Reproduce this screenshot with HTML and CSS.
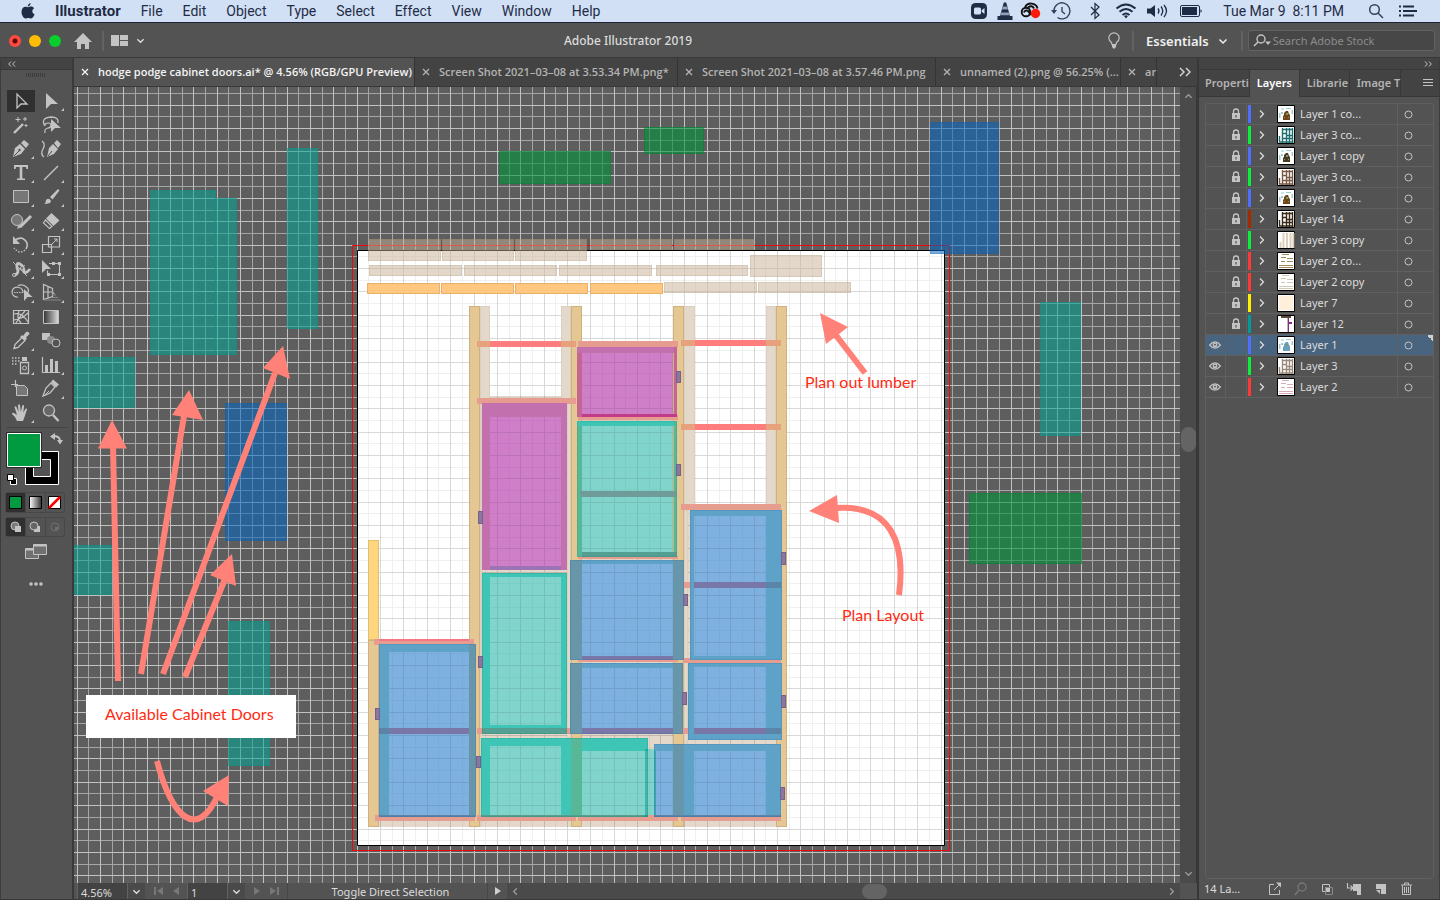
FILE: index.html
```html
<!DOCTYPE html>
<html lang="en">
<head>
<meta charset="utf-8">
<title>Adobe Illustrator 2019</title>
<link rel="stylesheet" href="styles.css">
</head>
<body>
<svg class="defs" aria-hidden="true">
  <symbol id="chev" viewBox="0 0 10 10"><path d="M1.500 3.500 5 7l3.500-3.500" fill="none" stroke="currentColor" stroke-width="1.500"/></symbol>
  <symbol id="x" viewBox="0 0 8 8"><path d="M1 1l6 6M7 1 1 7" stroke="currentColor" stroke-width="1.300"/></symbol>
  <symbol id="lock" viewBox="0 0 10 12"><path d="M2.500 6V3.500a2.500 2.500 0 0 1 5 0V6" fill="none" stroke="currentColor" stroke-width="1.300"/><path fill="currentColor" fill-rule="evenodd" d="M1 5h8v6H1zM4.400 7v2.500h1.200V7z"/></symbol>
  <symbol id="eye" viewBox="0 0 12 8"><path d="M.6 4Q6-2.400 11.400 4 6 10.400.6 4z" fill="none" stroke="currentColor" stroke-width="1.200"/><circle cx="6" cy="4" r="2.400" fill="currentColor"/><circle cx="6" cy="3.600" r=".9" fill="#4b4b4b"/></symbol>
</svg>

<header class="menubar">
  <nav class="menus">
    <button class="apple" aria-label="Apple menu"><svg width="14" height="16" viewBox="0 0 14 16"><path fill="#1f2c45" d="M9.600 0c.2 1.700-1.200 3.400-2.800 3.400C6.600 1.700 8.200.2 9.600 0zM7.100 4.300c.8 0 1.700-.7 3-.7 1.200 0 2.300.6 3 1.600-2.600 1.500-2.200 5 .5 6.100-.6 1.700-2 4.200-3.500 4.200-1 0-1.500-.6-2.800-.6s-1.900.6-2.800.6C2.500 15.500.5 12 .5 8.800c0-3.300 2-5.100 4-5.100 1.100 0 2 .6 2.600.6z"/></svg></button>
    <button class="strong">Illustrator</button><button>File</button><button>Edit</button><button>Object</button><button>Type</button><button>Select</button><button>Effect</button><button>View</button><button>Window</button><button>Help</button>
  </nav>
  <div class="status-icons">
    <svg width="26" height="20" viewBox="-13 -10 26 20"><rect x="-8" y="-8" width="16" height="16" rx="4.500" fill="#1f2c45"/><rect x="-5" y="-3.500" width="7" height="7" rx="1.500" fill="#d2e0f5"/><path fill="#d2e0f5" d="M2.700-.8 5.500-3v6L2.700.8z"/></svg>
    <svg width="26" height="20" viewBox="-13 -10 26 20"><path fill="#1f2c45" d="M-1.200-8.500h2.400L5 5h2.500v4h-15V5H-5z"/><path fill="#8fa0bb" d="M-2.200-4.500h4.400l.8 3h-6zM-4 1.500h8l.8 2.800h-9.600z"/></svg>
    <svg width="26" height="20" viewBox="-13 -10 26 20"><g fill="none" stroke="#111" stroke-width="1.900"><path d="M-6-3.500A6.500 6 0 0 1 6.500-2.500"/><circle cx="-5" cy="1" r="4.300"/><path d="M-7 1.500a2.500 2.500 0 0 1 4-1.500L0 4M-3-3.500q4-3 6 1"/></g><circle cx="4.500" cy="2.500" r="4.700" fill="#ff1a0a"/></svg>
    <svg width="34" height="20" viewBox="-17 -10 34 20"><g fill="none" stroke="#33415c" stroke-width="1.400"><path d="M-7-1A8 8 0 1 1-3.500 6.500"/><path d="M1-4v4.500l3 2.500"/></g><path d="M-10-1h6l-3 4z" fill="#33415c"/></svg>
    <svg width="34" height="20" viewBox="-17 -10 34 20"><path d="M-4-4 4 4 0 7.500v-15L4-4-4 4" fill="none" stroke="#1f2c45" stroke-width="1.200"/></svg>
    <svg width="28" height="20" viewBox="-14 -10 28 20"><g fill="none" stroke="#1f2c45" stroke-width="2"><path d="M-9.500-2.500q9.500-8 19 0M-6.500.8q6.500-5.600 13 0M-3.500 4q3.500-3 7 0"/></g><path d="M-2 5q2-1.600 4 0L0 7.500z" fill="#1f2c45"/></svg>
    <svg width="34" height="20" viewBox="-17 -10 34 20"><path d="M-10-2.500h3.500L-2-6V6l-4.500-3.500H-10z" fill="#1f2c45"/><path d="M1-2.500q2 2.500 0 5M4-4.500q3.500 4.500 0 9M7-6q5 6 0 12" fill="none" stroke="#1f2c45" stroke-width="1.300"/></svg>
    <svg width="34" height="20" viewBox="-17 -10 34 20"><rect x="-10.500" y="-5.500" width="19" height="11" rx="1.500" fill="none" stroke="#1f2c45"/><path d="M-9-4H6v8H-9z" fill="#1f2c45"/><path d="M9.500-2q2.500 2 0 4z" fill="#1f2c45"/></svg>
    <span class="clock">Tue Mar 9&nbsp; 8:11 PM</span>
    <svg class="spot" width="16" height="16" viewBox="0 0 16 16"><g fill="none" stroke="#33415c" stroke-width="1.500"><circle cx="6.500" cy="6.500" r="4.800"/><path d="m10 10 5 5"/></g></svg>
    <svg class="list" width="20" height="14" viewBox="0 0 20 14"><path d="M1 2.500h2m2 0h11M1 7h2m2 0h14M1 11.500h2m2 0h11" stroke="#1f2c45" stroke-width="1.800"/></svg>
  </div>
</header>

<div class="appbar">
  <div class="app-left">
    <div class="lights"><button class="light red" aria-label="Close"></button><button class="light yellow" aria-label="Minimize"></button><button class="light green" aria-label="Zoom"></button></div>
    <button class="home" aria-label="Home"><svg width="18" height="16" viewBox="0 0 18 16"><path fill="#c3c3c3" d="M9 0l9 9h-3v7h-4v-5H7v5H3V9H0z"/></svg></button>
    <span class="vline"></span>
    <button class="arrange" aria-label="Arrange documents"><svg width="17" height="12" viewBox="0 0 17 12"><path fill="#c3c3c3" d="M0 0h8v11H0zM9 0h8v5H9zM9 6h8v5H9z"/></svg><svg width="9" height="9"><use href="#chev"/></svg></button>
  </div>
  <h1>Adobe Illustrator 2019</h1>
  <div class="app-right">
    <svg width="14" height="18" viewBox="0 0 14 18"><path d="M5 12.500 4.500 10.500Q1.800 8.500 1.800 6a5.200 5.200 0 0 1 10.400 0q0 2.500-2.700 4.500L9 12.500z" fill="none" stroke="#c3c3c3" stroke-width="1.200"/><path d="M5 13h4v2L7 17l-2-2z" fill="#c3c3c3"/></svg>
    <span class="vline"></span>
    <button class="workspace">Essentials <svg width="10" height="10"><use href="#chev"/></svg></button>
    <span class="vline"></span>
    <label class="search"><svg width="18" height="13" viewBox="0 0 18 13"><circle cx="8" cy="5" r="4" fill="none" stroke="#c3c3c3" stroke-width="1.400"/><path d="m5 8-4 4" stroke="#c3c3c3" stroke-width="1.600"/><path d="M12 7.500h6L15 11z" fill="#c3c3c3"/></svg><input type="text" placeholder="Search Adobe Stock" aria-label="Search Adobe Stock"></label>
  </div>
</div>

<main class="workspace-row">
  <aside class="toolbar">
    <div class="collapse left"><svg width="8" height="6" viewBox="0 0 8 6"><path d="M3 .5.700 3 3 5.500M7 .5 4.700 3 7 5.500" fill="none" stroke="#c3c3c3"/></svg></div>
    <div class="grip"></div>
    <div class="tools" id="tools"></div>
    <div class="swatches">
      <svg width="60" height="56" viewBox="0 0 60 56">
        <path fill-rule="evenodd" fill="#000" stroke="#fff" d="M19.500 19.500h33v33h-33zM27.500 27.500h17v17h-17z"/>
        <path fill="#009a40" stroke="#2b2b2b" d="M.5.500h35v35H.5z"/><path fill="#009a40" stroke="#fff" d="M1.500 1.500h33v33h-33z"/>
        <path d="M47 4q7 0 7 5" fill="none" stroke="#c3c3c3" stroke-width="1.800"/><path d="M49 1v7l-5-3.500zM51 8h6l-3 4.500z" fill="#c3c3c3"/>
        <path d="M4.500 46.500h6v6h-6z" fill="#000" stroke="#fff"/><path d="M1.500 42.500h6v6h-6z" fill="#fff" stroke="#000"/>
      </svg>
    </div>
    <div class="trio">
      <button class="on" aria-label="Color"><svg width="13" height="13"><path fill="#009a40" stroke="#000" d="M.5.500h12v12H.5z"/></svg></button>
      <button aria-label="Gradient"><svg width="13" height="13"><defs><linearGradient id="gr"><stop offset="0" stop-color="#fff"/><stop offset="1" stop-color="#333"/></linearGradient></defs><path fill="url(#gr)" stroke="#000" d="M.5.500h12v12H.5z"/></svg></button>
      <button aria-label="None"><svg width="13" height="13"><path fill="#fff" stroke="#000" d="M.5.500h12v12H.5z"/><path d="M1 12 12 1" stroke="#f00" stroke-width="2.500"/></svg></button>
    </div>
    <div class="trio short">
      <button class="on" aria-label="Draw normal"><svg width="12" height="12"><circle cx="5" cy="5" r="4" fill="#7a7a7a" stroke="#c3c3c3"/><path d="M5 5h6v6H5z" fill="#c3c3c3"/></svg></button>
      <button aria-label="Draw behind"><svg width="12" height="12"><path d="M5 5h6v6H5z" fill="#c3c3c3"/><circle cx="5" cy="5" r="4" fill="#666" stroke="#c3c3c3"/></svg></button>
      <button aria-label="Draw inside"><svg width="12" height="12"><circle cx="6" cy="6" r="4" fill="none" stroke="#707070"/><path d="M6 6h3v2L7 9H6z" fill="#707070"/></svg></button>
    </div>
    <button class="screenmode" aria-label="Change screen mode"><svg width="22" height="16"><path d="M.5 4.500h13v10H.5z" fill="#707070" stroke="#c3c3c3"/><path d="M8.500.5h13v10h-13z" fill="#707070" stroke="#c3c3c3"/><path d="M0 5h8v1.500H0zM8 1h14v1.500H8z" fill="#c3c3c3"/></svg></button>
    <button class="more" aria-label="Edit toolbar"><svg width="14" height="4"><circle cx="2" cy="2" r="1.800" fill="#c3c3c3"/><circle cx="7" cy="2" r="1.800" fill="#c3c3c3"/><circle cx="12" cy="2" r="1.800" fill="#c3c3c3"/></svg></button>
  </aside>

  <section class="document">
    <div class="tabs">
      <button class="tab t1 active"><svg width="8" height="8"><use href="#x"/></svg><span>hodge podge cabinet doors.ai* @ 4.56% (RGB/GPU Preview)</span></button>
      <button class="tab t2"><svg width="8" height="8"><use href="#x"/></svg><span>Screen Shot 2021–03–08 at 3.53.34 PM.png*</span></button>
      <button class="tab t3"><svg width="8" height="8"><use href="#x"/></svg><span>Screen Shot 2021–03–08 at 3.57.46 PM.png</span></button>
      <button class="tab t4"><svg width="8" height="8"><use href="#x"/></svg><span>unnamed (2).png @ 56.25% (...</span></button>
      <button class="tab t5"><svg width="8" height="8"><use href="#x"/></svg><span>ar</span></button>
      <button class="overflow" aria-label="More documents"><svg width="12" height="10" viewBox="0 0 12 10"><path d="m1 1 4 4-4 4M7 1l4 4-4 4" fill="none" stroke="#dadada" stroke-width="1.400"/></svg></button>
    </div>
    <div class="view">
      <svg class="canvas" role="img" aria-label="Cabinet door layout">
        <g transform="translate(-74 -87)">
          <g id="deskGrid" shape-rendering="crispEdges"></g>
          <path fill="#fff" d="M358 251h586v594H358z"/>
          <g id="cases"></g>
          <g id="doors"></g>
          <g id="boardGrid" shape-rendering="crispEdges"></g>
          <g id="doorTint" opacity=".4"></g>
          <g id="parts"></g>
          <path fill="none" stroke="#000" d="M357.500 250.500h587v595h-587z"/>
          <path fill="none" stroke="#f00808" d="M352.500 245.500h597v605h-597z"/>
          <g id="loose"></g>
          <g fill="none" stroke="#ff8177" stroke-width="6">
            <path d="M118 681 113 445M141 674l43-258M163 674l112-301M185 677l40-98M157 761c15 57 40 80 61 34M865 373l-30-39M899 595c7-54-9-91-64-87"/>
          </g>
          <path fill="#ff8177" d="M112 420 98 448.500h29zM189 390l-17 25 31 5zM283 346l-20 22 27 11zM232 554l-22 21 26 11zM229 775l-26 16 25 15zM820 313l28 14-22 17zM809 511l28-16 2 28z"/>
          <path fill="#fff" d="M86 695h210v43H86z"/>
          <g class="notes"><text x="105" y="720">Available Cabinet Doors</text><text x="805" y="388">Plan out lumber</text><text x="842" y="621">Plan Layout</text></g>
        </g>
      </svg>
      <div class="vscroll"><svg width="9" height="9" class="up"><use href="#chev"/></svg><span class="thumb"></span><svg width="9" height="9"><use href="#chev"/></svg></div>
    </div>
    <div class="statusbar">
      <input class="zoom" value="4.56%" aria-label="Zoom level"><button class="drop" aria-label="Zoom presets"><svg width="9" height="9"><use href="#chev"/></svg></button>
      <div class="nav"><svg width="9" height="8"><path d="M0 0h2v8H0zM9 0v8L3 4z" fill="#777"/></svg><svg width="6" height="8"><path d="M6 0v8L0 4z" fill="#777"/></svg></div>
      <input class="page" value="1" aria-label="Artboard number"><button class="drop" aria-label="Artboards"><svg width="9" height="9"><use href="#chev"/></svg></button>
      <div class="nav"><svg width="6" height="8"><path d="M0 0v8l6-4z" fill="#777"/></svg><svg width="9" height="8"><path d="M7 0h2v8H7zM0 0v8l6-4z" fill="#777"/></svg></div>
      <span class="hint">Toggle Direct Selection</span>
      <button class="play" aria-label="Status options"><svg width="6" height="8"><path d="M0 0v8l6-4z" fill="#d0d0d0"/></svg></button>
      <div class="hscroll"><svg width="9" height="9" class="lft"><use href="#chev"/></svg><span class="thumb"></span><svg width="9" height="9" class="rgt"><use href="#chev"/></svg></div>
      <span class="corner"></span>
    </div>
  </section>

  <aside class="panel">
    <div class="collapse right"><svg width="8" height="6" viewBox="0 0 8 6"><path d="M1 .5 3.300 3 1 5.500M5 .5 7.300 3 5 5.500" fill="none" stroke="#c3c3c3"/></svg></div>
    <div class="ptabs"><button>Properti</button><button class="active">Layers</button><button>Librarie</button><button>Image T</button><svg width="10" height="8"><path d="M0 .5h10M0 3.500h10M0 6.500h10" stroke="#c3c3c3"/></svg></div>
    <ul class="layers" id="layers"></ul>
    <footer class="pfoot">
      <span>14 La...</span>
      <svg width="14" height="14"><path d="M6 2.500H1.500v10h10V8" fill="none" stroke="#c3c3c3"/><path d="M6 8l5-5" stroke="#c3c3c3"/><path d="M8 .5h5v5z" fill="#c3c3c3"/></svg>
      <svg width="14" height="14"><circle cx="8" cy="5" r="4" fill="none" stroke="#777" stroke-width="1.300"/><path d="m5 8-4 5" stroke="#777" stroke-width="1.500"/></svg>
      <svg width="14" height="14"><path d="M2.500 2.500h7v7h-7z" fill="none" stroke="#c3c3c3"/><path d="M5 5h5v5H5z" fill="#c3c3c3"/><path d="M5.500 5.500h7v7h-7z" fill="none" stroke="#888"/></svg>
      <svg width="16" height="14"><path d="M1.500 1v5h5M4.500 3.500 7 6 4.500 8.500" fill="none" stroke="#c3c3c3" stroke-width="1.200"/><path d="M7 2h8v11h-4V9H7z" fill="#c3c3c3"/></svg>
      <svg width="14" height="14"><path d="M2 2h10v10H7V7H2z" fill="#c3c3c3"/><path d="M2 8h4v4z" fill="#c3c3c3"/></svg>
      <svg width="14" height="14"><path d="M1 3h11M4.500 3V1h4v2M2.500 3.500v9h8v-9M4.500 5v6M6.500 5v6M8.500 5v6" fill="none" stroke="#c3c3c3"/></svg>
    </footer>
  </aside>
</main>
<script src="app.js"></script>
</body>
</html>
```
FILE: styles.css
```css
* { box-sizing: border-box; }
body { margin: 0; height: 100vh; display: flex; flex-direction: column; overflow: hidden; background: #535353; color: #dcdcdc; font: 11px/14px "Noto Sans", "Open Sans", sans-serif; }
button, input { font: inherit; color: inherit; background: none; border: 0; padding: 0; margin: 0; outline: 0; }
svg { display: block; flex: none; }
.defs { position: absolute; width: 0; height: 0; }

.menubar { height: 23px; flex: none; display: flex; justify-content: space-between; align-items: center; background: #d2e0f5; border-bottom: 1px solid #1b2233; color: #1f2c45; font: 14px/22px Roboto, Inter, sans-serif; white-space: nowrap; }
.menus { display: flex; gap: 20px; padding-left: 21px; align-items: center; }
.menus .strong { font-weight: 700; font-size: 15px; }
.status-icons { display: flex; align-items: center; padding-right: 22px; }
.clock { margin: 0 24px 0 15px; }
.spot { margin-right: 14px; }

.appbar { height: 34px; flex: none; display: flex; align-items: center; padding-top: 1px; }
.app-left { width: 160px; display: flex; align-items: center; padding-left: 9px; }
.lights { display: flex; gap: 8px; margin-right: 13px; }
.light { width: 12px; height: 12px; border-radius: 50%; }
.light.red { background: radial-gradient(circle, #5a0804 2px, #ff4a42 3px); }
.light.yellow { background: #ffbd05; }
.light.green { background: #08cf2c; }
.vline { width: 2px; height: 20px; background: #626262; }
.home { margin-right: 10px; }
.arrange { display: flex; gap: 8px; align-items: center; margin-left: 7px; }
h1 { flex: 1; margin: 0; text-align: center; font-size: 12px; font-weight: 500; }
.app-right { width: 344px; display: flex; align-items: center; padding: 0 5px 0 11px; }
.app-right .vline { margin: 0 12px 0 11px; }
.workspace { display: flex; gap: 9px; align-items: center; font-size: 13px; font-weight: 600; color: #f0f0f0; }
.app-right .workspace + .vline { margin: 0 5px 0 13px; }
.search { flex: 1; min-width: 0; height: 21px; display: flex; align-items: center; gap: 2px; padding-left: 4px; border: 1px solid #636363; border-radius: 3px; background: #474747; }
.search input { min-width: 0; flex: 1; font-size: 11px; }
.search input::placeholder { color: #8c8c8c; opacity: 1; }

.workspace-row { flex: 1; min-height: 0; display: flex; border-bottom: 1px solid #383838; }
.collapse { height: 13px; flex: none; display: flex; align-items: center; padding: 0 7px; background: #434343; border-top: 1px solid #383838; border-bottom: 1px solid #383838; }
.collapse.right { justify-content: flex-end; }

.toolbar { width: 74px; flex: none; display: flex; flex-direction: column; border-left: 1px solid #3c3c3c; border-right: 2px solid #3a3a3a; }
.grip { width: 20px; height: 4px; margin: 3px 0 12px 25px; background: repeating-linear-gradient(90deg, #3c3c3c 0 1px, #535353 1px 2px); }
.tools { display: grid; grid-template-columns: 30px 30px; grid-auto-rows: 24px; margin-left: 5px; }
.tools button.on { background: linear-gradient(#303030, #303030) 1px 1px / 28px 22px no-repeat; }
.swatches { margin: 2px 5px 0; padding-top: 4px; border-top: 1px solid #454545; }
.trio { display: grid; grid-template-columns: repeat(3, 1fr); width: 60px; height: 21px; margin: 4px 0 0 4px; border: 1px solid #474747; border-radius: 3px; }
.trio.short { height: 20px; margin-top: 4px; }
.trio button { display: grid; place-items: center; border-left: 1px solid #474747; }
.trio .on { background: #303030; border-left: 0; }
.screenmode { align-self: flex-start; margin: 7px 0 0 24px; }
.more { align-self: flex-start; margin: 22px 0 0 28px; }

.document { flex: 1; min-width: 0; display: flex; flex-direction: column; }
.tabs { height: 30px; flex: none; display: flex; background: #434343; border-top: 1px solid #383838; border-bottom: 1px solid #383838; font: 700 11px/14px "Open Sans", "Noto Sans", sans-serif; font-weight: 600; color: #b4b4b4; }
.tab { display: flex; align-items: center; gap: 9px; padding-left: 7px; border-right: 1px solid #333; white-space: nowrap; text-align: left; flex: none; }
.tab.active { background: #535353; color: #f4f4f4; }
.t1 { width: 341px; } .t2 { width: 263px; } .t3 { width: 258px; } .t4 { width: 185px; } .t5 { width: 36px; }
.overflow { margin: 0 6px 0 auto; }
.view { flex: 1; min-height: 0; display: flex; }
.canvas { flex: 1; min-width: 0; height: 100%; background: #5e5e5e; }
.notes { font: 16px Lato, sans-serif; fill: #ff2b12; }
.vscroll { width: 17px; display: flex; flex-direction: column; justify-content: space-between; align-items: center; padding: 5px 0; background: #4a4a4a; color: #999; border-right: 1px solid #383838; }
.vscroll .thumb { width: 15px; height: 25px; border-radius: 8px; background: #646464; margin-bottom: 92px; }
.up { transform: rotate(180deg); }
.lft { transform: rotate(90deg); }
.rgt { transform: rotate(-90deg); }
.statusbar { height: 16px; flex: none; display: flex; align-items: center; padding-left: 3px; background: #535353; }
.statusbar input { height: 16px; background: #434343; padding: 2px 0 0 3px; border-left: 1px solid #626262; }
.zoom { width: 50px; }
.page { width: 40px; }
.drop { width: 18px; height: 16px; display: grid; place-items: center; background: #4a4a4a; border-left: 1px solid #626262; }
.nav { width: 42px; display: flex; justify-content: center; gap: 10px; }
.hint { width: 200px; padding: 2px 0 0 6px; text-align: center; border-left: 1px solid #474747; }
.play { width: 20px; height: 16px; display: grid; place-items: center; border-left: 1px solid #474747; }
.hscroll { flex: 1; height: 16px; display: flex; justify-content: space-between; align-items: center; padding: 0 4px; background: #4a4a4a; color: #999; }
.hscroll .thumb { width: 25px; height: 15px; border-radius: 8px; background: #646464; margin-left: 61px; }
.corner { width: 17px; }

.panel { width: 243px; flex: none; display: flex; flex-direction: column; border-left: 2px solid #383838; border-right: 1px solid #3c3c3c; }
.ptabs { display: flex; height: 27px; flex: none; align-items: center; background: #434343; font-weight: 600; color: #b4b4b4; border-bottom: 1px solid #383838; }
.ptabs button { min-width: 50px; height: 26px; padding-left: 7px; white-space: nowrap; text-align: left; border-right: 1px solid #383838; }
.ptabs button:first-child { padding-left: 6px; }
.ptabs .active { background: #535353; color: #fff; height: 27px; }
.ptabs svg { margin-left: auto; margin-right: 6px; }
.layers { flex: 1; min-height: 0; margin: 6px 5px 0 6px; padding: 0; list-style: none; border: 1px solid #606060; border-radius: 3px; }
.layer { height: 21px; display: grid; grid-template-columns: 20px 21px 5px 23px 22px 1fr 35px; align-items: center; border-bottom: 1px solid #606060; }
.layer.selected { background: linear-gradient(45deg, transparent 50%, #d0d0d0 50%) right top / 6px 6px no-repeat #49647e; }
.layer > * { height: 20px; display: flex; align-items: center; justify-content: center; }
.layer .cell { border-right: 1px solid #606060; color: #c3c3c3; }
.layer .cell:first-child { padding-right: 2px; }
.layer .bar { width: 3px; height: 18px; margin-left: 1px; }
.layer .twist { padding-right: 4px; }
.layer .name { justify-content: flex-start; padding-left: 3px; border-right: 1px solid #606060; white-space: nowrap; }
.layer .target { justify-content: flex-start; padding-left: 6px; }
.pfoot { height: 20px; flex: none; display: flex; align-items: center; gap: 12px; padding-left: 5px; }
.pfoot span { width: 52px; }
```
FILE: app.js
```javascript
const C = '#c3c3c3';
const line = (d, w = 1.2) => `<path d="${d}" fill="none" stroke="${C}" stroke-width="${w}"/>`;
const solid = d => `<path d="${d}" fill="${C}"/>`;

/* Tool glyphs, drawn in a 30 x 24 cell: [label, markup, has flyout] */
const tools = [
  ['Selection', line('M11 5v14l4-4h6z', 1.3), 0],
  ['Direct selection', solid('M10 4v16l5-5h7z'), 1],
  ['Magic wand', line('M8 20 17 11', 2.4) + line('M12 4v5M9.500 6.500h5M19 4v4M17 6h4M20 11v3M18.500 12.500h3', 1), 0],
  ['Lasso', line('M9 13q-5-8 6-9 8 0 7 6', 1.3) + line('M9 12a3 2.500 0 1 1 3 3q-4 1-3 5', 1.2) + solid('M15 6v13l4-4h6z'), 0],
  ['Pen', solid('M7 20l2-9 5-4 5 5-4 5zM15 6l3-3 5 4-3 4z') + '<path d="m8 19 5-5" stroke="#535353"/><circle cx="13.500" cy="13" r="1.200" fill="#535353"/>', 1],
  ['Curvature', solid('M11 20l2-9 4-4 5 5-4 5zM18 6l3-3 4 4-3 4z') + line('M6 4q4 3 1 8t1 8', 1.3) + '<path d="m12 19 4-5" stroke="#535353"/>', 0],
  ['Type', solid('M8 4h14v4h-1.500l-.5-2h-3.700v11.500H19V19h-8v-1.500h2.700V6H10l-.5 2H8z'), 1],
  ['Line', line('M8 19 22 5', 1.4), 1],
  ['Rectangle', '<path d="M7.500 5.500h15v12h-15z" fill="#777" stroke="#c3c3c3"/>', 1],
  ['Paintbrush', solid('M14 12 22 4l1.500 1.500-7 9zM8 19q2-1 2-4 3-3 5 1 0 3-7 3z'), 1],
  ['Shaper', '<circle cx="11" cy="11" r="5.500" fill="#777" stroke="#c3c3c3"/>' + line('M14 18 25 7', 3) + solid('M11 20l1.500-4 3 2z'), 1],
  ['Eraser', solid('M15.500 4 23.500 11.500 17.500 17 10 9.500z') + line('M9.500 11 16 17.500 13.500 19.500 7.500 14z', 1.2), 1],
  ['Rotate', line('M9 7q8-5 12 3 1 3-1 6', 1.600) + solid('M7 3v8h7z') + '<path d="M19 17q-5 5-11-2" fill="none" stroke="#c3c3c3" stroke-width="1.400" stroke-dasharray="1.500 1.500"/>', 1],
  ['Scale', line('M13 3.500h10.500v10.500H12.500V3.500zM6.500 11.500h9v8h-9z') + line('M16 11l5-5M18 6h3v3', 1), 1],
  ['Width', line('M8 19q6-3 3-8-1-6 3-4t4 8q2 2 6-3', 2.8) + line('M7 5l14 14M9 17l10-9', .9) + '<circle cx="8" cy="18" r="1.500" fill="#535353" stroke="#c3c3c3"/><circle cx="16" cy="11" r="1.500" fill="#535353" stroke="#c3c3c3"/>', 1],
  ['Free transform', solid('M6 3v13l4-4h5z') + line('M13 6.500h10.500v11H11.500v-4', 1.1) + solid('M11 16h3v3h-3zM22 16h3v3h-3zM22 5h3v3h-3zM16 5h3v3h-3z'), 1],
  ['Shape builder', line('M12 4.500q5-2 9 2 3 3 0 6M12 16a5 5 0 1 1 1-9.500q4 1 4 5', 1.2) + '<path d="M8 11.500h10" stroke="#c3c3c3" stroke-dasharray="1.500 1"/>' + solid('M18 8v12l3.500-4h5z'), 1],
  ['Perspective grid', line('M7.500 3.500v15l9-3v-8zM7.500 11h9M12 5.500V17', 1.2) + '<path d="M16 9l3 4h-3z" fill="#aaa"/><path d="M16 14h4M15 16.500h7M8 19h17" stroke="#888"/>', 1],
  ['Mesh', line('M7.500 5.500h15v13h-15zM8 9q8-2 14 8M8 15q8-1 14-7M13 6q-3 7 2 12M19 6q-5 5-9 12'), 0],
  ['Gradient', '<path d="M7.500 5.500h15v13h-15z" fill="url(#toolGr)" stroke="#c3c3c3"/>', 0],
  ['Eyedropper', line('M8 19.500l1-4 7-7 3 3-7 7z', 1.3) + solid('M14 8l2-2 1 1 3-4q3-1 3.500 2L20 8.500l1 1-2 2z'), 1],
  ['Blend', solid('M6 4h8v7H6z') + '<circle cx="15" cy="11" r="4" fill="#888"/><circle cx="20" cy="14" r="4" fill="#535353" stroke="#c3c3c3"/>', 0],
  ['Symbol sprayer', line('M14.500 9.500h8v11h-8z', 1.3) + solid('M16 4h5v4h-5z') + '<circle cx="18.500" cy="15" r="2" fill="none" stroke="#c3c3c3"/>' + '<path d="M6 5h8M6 8h8M6 11h5" stroke="#c3c3c3" stroke-width="1.500" stroke-dasharray="1.500 1.500"/>', 1],
  ['Column graph', line('M6.500 4v15.500H24') + solid('M9 12h3v7H9zM14 6h3v13h-3zM19 8h3v11h-3z'), 1],
  ['Artboard', line('M5 7.500h7M9.500 3v7') + '<path d="M10.500 8.500h8l3 3v7h-11z" fill="#777" stroke="#c3c3c3"/>', 0],
  ['Slice', line('M7 19l3-8 5-5 4 4-5 6z', 1.3) + solid('M15 5l2-2.500 6 5-3 3z') + line('M8 19l5-5', 1), 1],
  ['Hand', solid('M11 20q-2-5-5-7 0-2 2-1l3 2-2.500-8q1-1.500 2 0l2 5-.5-7q1-1.500 2 0l.8 7 1.500-6.500q1.200-1 1.800.3l-.8 7 2.200-4q1.500-1 1.600.5L18.500 16 17 20z'), 1],
  ['Zoom', line('M17 14l5.500 6', 2.4) + '<circle cx="13" cy="9.500" r="5.500" fill="#666" stroke="#c3c3c3" stroke-width="1.300"/>', 0]
];
document.getElementById('tools').innerHTML = tools.map(([label, art, fly], i) =>
  `<button aria-label="${label}"${i ? '' : ' class="on"'}><svg width="30" height="24" viewBox="0 0 30 24">${i === 19 ? '<defs><linearGradient id="toolGr"><stop offset="0" stop-color="#333"/><stop offset="1" stop-color="#ddd"/></linearGradient></defs>' : ''}${art}${fly ? solid('M28 19v3h-3z') : ''}</svg></button>`).join('');

/* Layers: [name, colour, visible, thumbnail kind, thumbnail colour] */
const thumb = {
  cabin: c => `<path d="M4 4h3M9 3.500h5" stroke="#9cc"/><path d="M2 8h1.500v5H2zM14.500 5h1.500v4h-1.500zM4 7h2v2H4z" fill="#a5c8cc"/><path d="M6 15v-4l1-1V8l2-2h2l1 3 1 1v5z" fill="${c}"/><path d="M9 8h2v2H9zM7 12h1v1H7zM11 12h1v1h-1z" fill="#7a9a68"/>`,
  frame: c => `<path d="M5.500 2v15M9.500 2v15M12.500 2v15M15.500 2v15M5 3.500h11M5 7.500h5M9 9.500h7M5 12.500h11M2.500 10v6h14" fill="none" stroke="${c}" stroke-width="1.400"/>`,
  posts: c => `<path d="M3.500 11v6M6.500 2v15M10 2v15M13.500 2v15M16.500 2v15" stroke="${c}" stroke-width="2"/>`,
  lumber: c => `<path d="M5 2.500h7M4 5.500h5M10 6.500h6M4 9.500h4M10 9.500h6M2 13.500h14M2 15.500h14" stroke="${c}"/>`,
  fill: c => `<path d="M2 2h14v14H2z" fill="${c}"/>`,
  post: c => `<path d="M4 1h10v2H4z" fill="#5b4a3b"/><path d="M10.500 3v14" stroke="#bbb"/><path d="M11.500 3v14" stroke="${c}"/><path d="M11 7h4v2h-4z" fill="${c}"/>`
};
const layers = [
  ['Layer 1 co...', '#4f6fff', 0, 'cabin', '#6d4516'], ['Layer 3 co...', '#0bf03a', 0, 'frame', '#1d6e70'],
  ['Layer 1 copy', '#4f6fff', 0, 'cabin', '#463a20'], ['Layer 3 co...', '#0bf03a', 0, 'frame', '#7b5a45'],
  ['Layer 1 co...', '#4f6fff', 0, 'cabin', '#6d4516'], ['Layer 14', '#a52a00', 0, 'frame', '#3a2a18'],
  ['Layer 3 copy', '#0bf03a', 0, 'posts', '#dccfba'], ['Layer 2 co...', '#ff3838', 0, 'lumber', '#a08a5c'],
  ['Layer 2 copy', '#ff3838', 0, 'lumber', '#cfc8b2'], ['Layer 7', '#fff200', 0, 'fill', '#ffefdb'],
  ['Layer 12', '#009c9c', 0, 'post', '#8a2a86'], ['Layer 1', '#4f6fff', 1, 'cabin', '#6aa0c4'],
  ['Layer 3', '#0bf03a', 1, 'frame', '#9b8a7b'], ['Layer 2', '#ff3838', 1, 'lumber', '#dcaab4']
];
document.getElementById('layers').innerHTML = layers.map(([name, color, on, kind, tint], i) =>
  `<li class="layer${i === 11 ? ' selected' : ''}"><span class="cell">${on ? '<svg width="12" height="8"><use href="#eye"/></svg>' : ''}</span><span class="cell">${on ? '' : '<svg width="10" height="12"><use href="#lock"/></svg>'}</span><span class="bar" style="background:${color}"></span><span class="twist"><svg width="6" height="8"><path d="m1 .5 3.500 3.500L1 7.500" fill="none" stroke="#ddd" stroke-width="1.300"/></svg></span><span><svg width="18" height="18"><path d="M.5.500h17v17H.5z" fill="#fff" stroke="#000"/>${thumb[kind](tint)}</svg></span><span class="name">${name}</span><span class="target"><svg width="9" height="9"><circle cx="4.500" cy="4.500" r="3.500" fill="none" stroke="#c3c3c3"/></svg></span></li>`).join('');

/* Grid: one division every 11.675 units, every second one stronger */
function grid(id, x0, y0, x1, y1, strong, weak) {
  const d = ['', ''];
  for (let k = -40; k < 300; k++) {
    const x = Math.round(380.1 + k * 11.675) , y = Math.round(268.1 + k * 11.675);
    if (x >= x0 && x < x1) d[k & 1] += `M${x}.500 ${y0}V${y1}`;
    if (y >= y0 && y < y1) d[k & 1] += `M${x0} ${y}.500H${x1}`;
  }
  document.getElementById(id).innerHTML = `<path d="${d[1]}" stroke="${weak}"/><path d="${d[0]}" stroke="${strong}"/>`;
}
grid('deskGrid', 74, 87, 2600, 1800, '#c2c2c2', '#a6a6a6');
grid('boardGrid', 358, 251, 944, 845, 'rgba(0,0,0,.15)', 'rgba(0,0,0,.06)');

/* Boxes are [left, top, right, bottom] */
const box = (fill, list, edge = '') => list.map(([a, b, c, d]) =>
  `<path d="M${a} ${b}H${c}V${d}H${a}z" fill="${fill}"/>` + (edge ? `<path d="M${a + .5} ${b + .5}H${c - .5}V${d - .5}H${a + .5}z" fill="none" stroke="${edge}"/>` : '')).join('');
const put = (id, html) => { document.getElementById(id).innerHTML = html; };
const light = '#e3d8ca', shade = 'rgba(110,80,40,.18)';

put('cases', box(light, [[480, 396, 571, 827], [582, 341, 674, 827], [684, 504, 776, 827], [379, 640, 469, 827]]));
const doors =
  box('#cf7ec8', [[482, 403, 567, 570], [577, 347, 677, 417]]) +
  box('#80d4cc', [[482, 573, 567, 734], [481, 738, 648, 817], [645, 749, 656, 817], [577, 421, 677, 557]]) +
  box('#7fb1e0', [[379, 644, 476, 817], [570, 560, 684, 660], [570, 663, 683, 734], [690, 510, 782, 660], [688, 663, 782, 740], [654, 744, 781, 817]]);
put('doors', doors);
put('doorTint', doors);
put('parts',
  box(light, [[480, 306, 490, 403], [561, 306, 571, 403], [684, 306, 695, 510], [766, 306, 776, 510], [480, 403, 482, 827], [567, 403, 571, 738], [684, 510, 688, 744]], 'rgba(110,80,40,.06)') +
  box('#e5c793', [[368, 640, 379, 827], [469, 306, 480, 827], [571, 306, 582, 827], [673, 306, 684, 827], [776, 306, 787, 827]], shade) +
  box('#ffd680', [[368, 540, 379, 640]], shade) +
  box('#ff7d7d', [[490, 341, 561, 347], [695, 340, 766, 346], [695, 424, 766, 430]]) +
  box('#e7a17c', [[477, 341, 490, 347], [561, 341, 576, 347], [681, 340, 695, 346], [766, 340, 781, 346], [681, 424, 695, 430], [766, 424, 781, 430]]) +
  box('#e69c8e', [[477, 398, 576, 404], [578, 341, 678, 347], [578, 415, 678, 420], [374, 639, 474, 645], [681, 504, 781, 510], [578, 556, 678, 559], [578, 659, 678, 662], [683, 658, 781, 663], [477, 728, 576, 734], [683, 728, 781, 734], [375, 815, 475, 821], [477, 815, 576, 821], [578, 815, 678, 821], [681, 815, 781, 821], [681, 582, 690, 588]]) +
  box('#f47680', [[379, 639, 469, 641]]) +
  /* purple doors */
  box('#c270ae', [[482, 403, 490, 570], [561, 403, 567, 570], [490, 403, 561, 417], [577, 347, 677, 353]]) +
  box('#9c74b5', [[490, 566, 561, 570]]) +
  box('#c36792', [[577, 353, 582, 417], [674, 347, 677, 417]]) +
  box('#c23b88', [[582, 414, 677, 417]]) +
  /* teal doors */
  box('#3fc5b6', [[482, 573, 490, 734], [561, 573, 567, 734], [490, 573, 561, 577], [490, 725, 561, 729], [481, 738, 490, 817], [561, 738, 571, 817], [490, 738, 561, 746], [582, 738, 648, 751], [577, 421, 677, 426]]) +
  box('#57b898', [[571, 738, 582, 817], [577, 426, 582, 557], [674, 421, 677, 557]]) +
  box('#559e92', [[482, 728, 567, 734], [582, 552, 677, 557], [481, 815, 648, 817]]) +
  box('#6f9c98', [[580, 491, 677, 497]]) +
  box('rgba(0,150,140,.5)', [[645, 749, 648, 817], [654, 749, 656, 817]]) +
  /* blue doors */
  box('#5fa2c8', [[379, 644, 389, 817], [389, 644, 469, 652], [582, 560, 673, 564], [582, 663, 673, 668], [690, 510, 694, 660], [766, 510, 782, 660], [694, 510, 766, 516], [694, 656, 766, 660], [688, 663, 694, 740], [766, 663, 782, 740], [694, 663, 766, 667], [694, 734, 766, 740], [684, 744, 694, 817], [766, 744, 781, 817], [694, 744, 766, 751]]) +
  box('#6796ab', [[570, 560, 582, 660], [673, 560, 684, 660], [570, 663, 582, 734], [673, 663, 683, 734], [673, 744, 684, 817], [469, 644, 476, 817]]) +
  box('#5fa2c8', [[654, 744, 673, 751]]) +
  box('#7877a8', [[389, 728, 469, 734], [694, 582, 766, 588], [582, 656, 673, 660], [582, 728, 673, 734], [694, 728, 766, 734]]) +
  box('#5a84a8', [[379, 728, 389, 734], [766, 582, 781, 588], [766, 728, 781, 734], [379, 815, 475, 817], [654, 815, 781, 817]]) +
  box('none', [[379, 644, 476, 817], [570, 560, 684, 660], [570, 663, 683, 734], [690, 510, 782, 660], [688, 663, 782, 740], [654, 744, 781, 817]], 'rgba(30,90,150,.15)') +
  box('none', [[482, 573, 567, 734], [481, 738, 648, 817], [577, 421, 677, 557]], 'rgba(0,120,90,.15)') +
  /* hinges */
  box('#8b779c', [[478, 511, 483, 524], [676, 371, 681, 383], [676, 464, 681, 476], [683, 594, 688, 606], [682, 692, 687, 705], [781, 552, 786, 565], [781, 695, 786, 708], [780, 787, 785, 800], [375, 708, 380, 720], [478, 656, 483, 668], [476, 756, 481, 768]], 'rgba(50,30,110,.25)'));
put('loose',
  box('rgba(198,175,148,.5)', [[368, 239, 441, 261], [442, 239, 514, 261], [515, 239, 587, 261], [590, 239, 672, 250], [674, 239, 755, 250], [369, 265, 462, 276], [464, 265, 557, 276], [559, 265, 652, 276], [656, 265, 748, 276], [750, 255, 822, 277], [664, 282, 757, 293], [758, 282, 851, 293]], 'rgba(110,80,40,.1)') +
  box('#ffc780', [[367, 283, 440, 294], [441, 283, 514, 294], [515, 283, 588, 294], [590, 283, 663, 294]], 'rgba(110,60,0,.16)') +
  box('rgba(0,166,152,.55)', [[150, 190, 216, 355], [215, 198, 237, 355], [287, 148, 318, 329], [74, 357, 135, 408], [74, 545, 112, 595], [228, 621, 270, 766], [1040, 302, 1081, 436]], 'rgba(0,140,130,.2)') +
  box('rgba(0,102,194,.55)', [[225, 403, 287, 541], [930, 122, 999, 254]], 'rgba(0,90,170,.15)') +
  box('rgba(0,148,56,.6)', [[499, 151, 611, 184], [644, 127, 704, 154], [969, 493, 1082, 564]], 'rgba(0,120,50,.3)'));
```
